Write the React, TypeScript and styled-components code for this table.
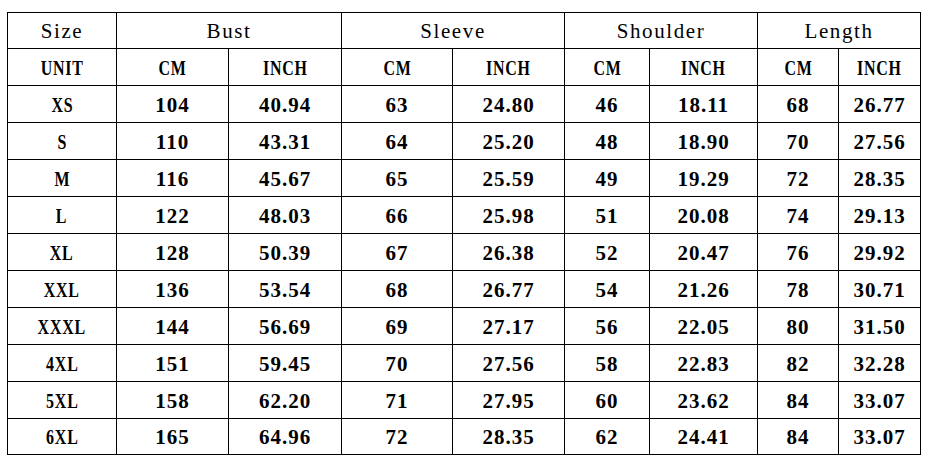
import React from "react";
import styled, { createGlobalStyle } from "styled-components";

const GlobalStyle = createGlobalStyle`
  html, body {
    margin: 0;
    padding: 0;
    background: #ffffff;
  }
  body {
    width: 929px;
    height: 460px;
    overflow: hidden;
  }
`;

const Page = styled.div`
  padding: 12px 0 0 7px;
  box-sizing: border-box;
  width: 929px;
  height: 460px;
`;

const Table = styled.table`
  border-collapse: collapse;
  table-layout: fixed;
  width: 913px;
  font-family: "Liberation Serif", "Times New Roman", serif;
  font-size: 21px;
  color: #000;
`;

const Row = styled.tr<{ $h: number }>`
  height: ${(p) => p.$h}px;
`;

const Cell = styled.td`
  border: 1px solid #000;
  padding: 2px 0 0 0;
  text-align: center;
  vertical-align: middle;
  white-space: nowrap;
  line-height: 1;
`;

const Heading = styled.span`
  font-weight: 400;
  letter-spacing: 1.6px;
`;

const Label = styled.span`
  display: inline-block;
  font-weight: 700;
  letter-spacing: 1px;
  transform: scaleX(0.76);
`;

const Num = styled.span`
  font-weight: 700;
  letter-spacing: 1px;
`;

const widths = [109, 112, 113, 111, 112, 85, 108, 81, 82];

const groups = ["Bust", "Sleeve", "Shoulder", "Length"];

const data: string[][] = [
  ["XS", "104", "40.94", "63", "24.80", "46", "18.11", "68", "26.77"],
  ["S", "110", "43.31", "64", "25.20", "48", "18.90", "70", "27.56"],
  ["M", "116", "45.67", "65", "25.59", "49", "19.29", "72", "28.35"],
  ["L", "122", "48.03", "66", "25.98", "51", "20.08", "74", "29.13"],
  ["XL", "128", "50.39", "67", "26.38", "52", "20.47", "76", "29.92"],
  ["XXL", "136", "53.54", "68", "26.77", "54", "21.26", "78", "30.71"],
  ["XXXL", "144", "56.69", "69", "27.17", "56", "22.05", "80", "31.50"],
  ["4XL", "151", "59.45", "70", "27.56", "58", "22.83", "82", "32.28"],
  ["5XL", "158", "62.20", "71", "27.95", "60", "23.62", "84", "33.07"],
  ["6XL", "165", "64.96", "72", "28.35", "62", "24.41", "84", "33.07"],
];

export default function App() {
  return (
    <>
      <GlobalStyle />
      <Page>
        <Table>
          <colgroup>
            {widths.map((w, i) => (
              <col key={i} style={{ width: w }} />
            ))}
          </colgroup>
          <tbody>
            <Row $h={36}>
              <Cell>
                <Heading>Size</Heading>
              </Cell>
              {groups.map((g) => (
                <Cell key={g} colSpan={2}>
                  <Heading>{g}</Heading>
                </Cell>
              ))}
            </Row>
            <Row $h={37}>
              <Cell>
                <Label>UNIT</Label>
              </Cell>
              {groups.map((g) => (
                <React.Fragment key={g}>
                  <Cell>
                    <Label>CM</Label>
                  </Cell>
                  <Cell>
                    <Label>INCH</Label>
                  </Cell>
                </React.Fragment>
              ))}
            </Row>
            {data.map((r, i) => (
              <Row key={r[0]} $h={i === data.length - 1 ? 36 : 37}>
                {r.map((v, j) => (
                  <Cell key={j}>
                    {j === 0 ? <Label>{v}</Label> : <Num>{v}</Num>}
                  </Cell>
                ))}
              </Row>
            ))}
          </tbody>
        </Table>
      </Page>
    </>
  );
}
